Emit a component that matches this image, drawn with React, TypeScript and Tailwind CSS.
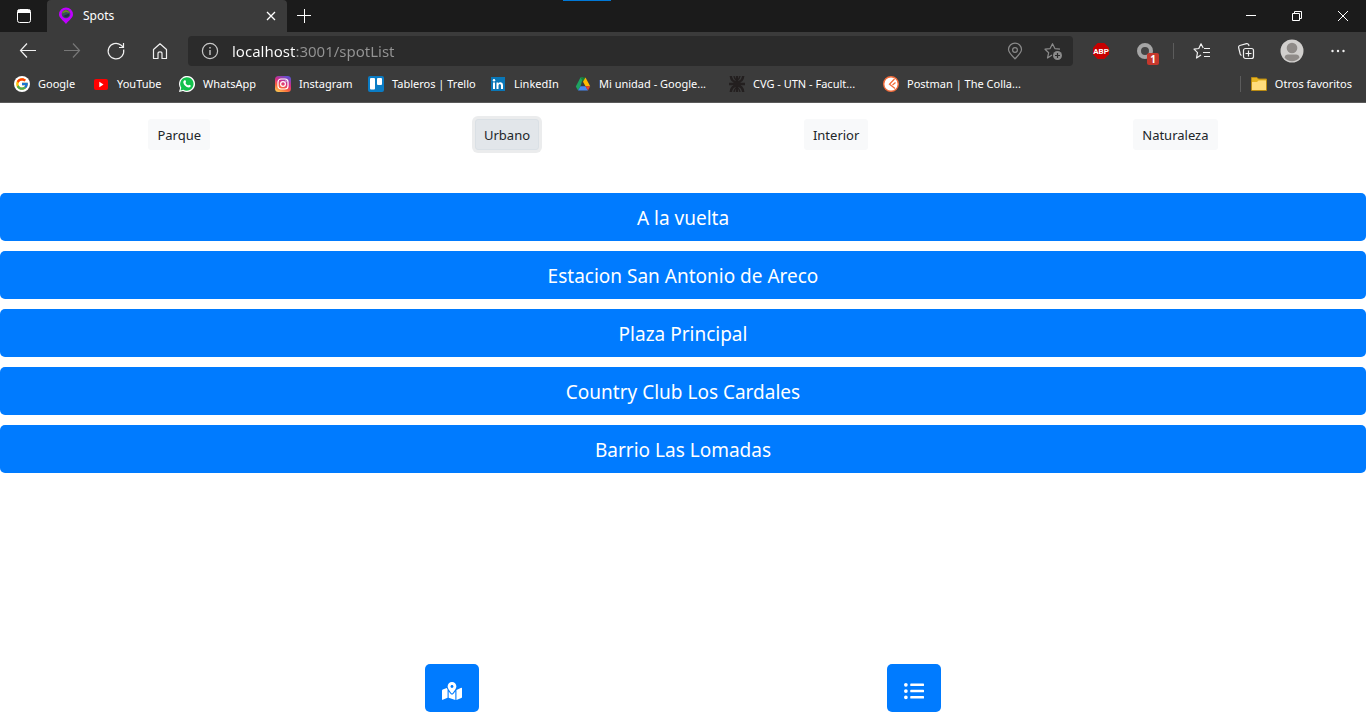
import type { ReactNode } from "react";
import { FaListUl, FaMapMarkedAlt } from "react-icons/fa";
import { FcGoogle } from "react-icons/fc";

const line = {
  width: 20,
  height: 20,
  viewBox: "0 0 20 20",
  fill: "none",
  stroke: "currentColor",
  strokeWidth: 1.2,
  "aria-hidden": true,
} as const;

const BackIcon = () => (
  <svg {...line}>
    <path d="M18 9.500H2.500M9 2.500L2.500 9.500L9 16.500" />
  </svg>
);

const ForwardIcon = () => (
  <svg {...line}>
    <path d="M2 9.500H17.500M11 2.500L17.500 9.500L11 16.500" />
  </svg>
);

const ReloadIcon = () => (
  <svg {...line}>
    <path d="M17.600 8.500A7.800 7.800 0 1 1 14.800 4L17.200 6M17.500 2V6.500H13" />
  </svg>
);

const HomeIcon = () => (
  <svg {...line} strokeLinejoin="round">
    <path d="M3.500 8.500L10 2.800L16.500 8.500V17.500H12V12.500Q12 10.800 10 10.800Q8 10.800 8 12.500V17.500H3.500Z" />
  </svg>
);

const InfoIcon = () => (
  <svg {...line} className="shrink-0 text-[#c8c8c8]">
    <circle cx="10" cy="10" r="7.600" />
    <path d="M10 9V14M10 6V7.500" strokeWidth="1.400" />
  </svg>
);

const PinIcon = () => (
  <svg {...line}>
    <path d="M10 17.800C6 14 3.500 11.700 3.500 8.600A6.500 6.500 0 0 1 16.500 8.600C16.500 11.700 14 14 10 17.800Z" />
    <circle cx="10" cy="9" r="2.400" />
  </svg>
);

const StarAddIcon = () => (
  <svg {...line} strokeLinejoin="round">
    <path d="M9 14L4.500 17L5.700 11.700L2 8.200L7.100 7.600L9.500 2.700L11.900 7.600L17 8.200" />
    <circle cx="14.500" cy="14.500" r="4.500" fill="currentColor" stroke="none" />
    <path d="M14.500 12V17M12 14.500H17" stroke="#2b2b2b" />
  </svg>
);

const FavoritesIcon = () => (
  <svg {...line} strokeLinejoin="round">
    <path d="M9 14L4.500 17L5.500 11.700L2 8.200L6.800 7.500L9 2.800L11.200 7M12 7.500H18M11 11.500H18M12 15.500H18" />
  </svg>
);

const CollectionsIcon = () => (
  <svg {...line}>
    <rect x="7.500" y="7.500" width="10" height="10" rx="2" />
    <path d="M12.500 9.500V15.500M9.500 12.500H15.500M5.500 14.500Q4.500 14 4.200 13L2.600 6.500Q2.300 5 3.800 4.500L10.500 2.600Q12 2.300 12.700 3.800L13 5" />
  </svg>
);

const CloseIcon = () => (
  <svg {...line} width="10" height="10" viewBox="0 0 10 10">
    <path d="M1 1L9 9M9 1L1 9" strokeWidth="1.300" />
  </svg>
);

const SpotsLogo = () => (
  <svg width="16" height="18" viewBox="0 0 16 18" aria-hidden="true">
    <path d="M8 17C5.500 13.500 1 11 1 7.500A7 7 0 0 1 15 7.500C15 11 10.500 13.500 8 17Z" fill="#bf00ff" />
    <circle cx="8" cy="7" r="4.300" fill="#35505a" />
    <path d="M4 6.500A4.200 4.200 0 0 1 12 6L8 5Z" fill="#6d8b25" />
    <path d="M5 9L11 6.500V9L8 10.500Z" fill="#262c46" />
  </svg>
);

const AdBlockLogo = () => (
  <svg width="18" height="18" viewBox="0 0 18 18" aria-hidden="true">
    <path d="M5.700 1H12.300L17 5.700V12.300L12.300 17H5.700L1 12.300V5.700Z" fill="#c70000" />
    <text x="9" y="11.800" textAnchor="middle" fill="#fff" fontFamily="Roboto, sans-serif" fontSize="8" fontWeight="700">
      ABP
    </text>
  </svg>
);

const GoogleLogo = () => (
  <span className="flex size-4 items-center justify-center rounded-full bg-white">
    <FcGoogle size={14} />
  </span>
);

const YouTubeLogo = () => (
  <svg width="16" height="16" viewBox="0 0 16 16" aria-hidden="true">
    <rect x="1" y="3" width="14" height="11" rx="2" fill="#f00" />
    <path d="M6.300 5.800V11.200L10.500 8.500Z" fill="#fff" />
  </svg>
);

const WhatsAppLogo = () => (
  <svg width="16" height="16" viewBox="0 0 16 16" aria-hidden="true">
    <path d="M0 16L1.100 12A8 8 0 1 1 4 14.900Z" fill="#fff" />
    <path d="M1.500 14.500L2.300 11.700A6.700 6.700 0 1 1 4.400 13.700Z" fill="#12c04b" />
    <path d="M5.300 4.200L6.500 4.300L7.100 6L6.400 7Q7.300 8.700 9.200 9.500L10 8.700L11.800 9.500Q11.800 11.600 9.800 11.600Q5.300 10.700 4.300 6.500Q4.200 4.900 5.300 4.200Z" fill="#fff" />
  </svg>
);

const InstagramLogo = () => (
  <svg width="16" height="16" viewBox="0 0 16 16" fill="none" aria-hidden="true">
    <defs>
      <linearGradient id="insta" x1="0.200" y1="1" x2="0.700" y2="0">
        <stop offset="0" stopColor="#ffc850" />
        <stop offset="0.300" stopColor="#f9653c" />
        <stop offset="0.600" stopColor="#d82d83" />
        <stop offset="1" stopColor="#6250d2" />
      </linearGradient>
    </defs>
    <rect width="16" height="16" rx="3.500" fill="url(#insta)" />
    <rect x="3" y="3" width="10" height="10" rx="3" stroke="#fff" strokeWidth="1.200" />
    <circle cx="8" cy="8" r="2.400" stroke="#fff" strokeWidth="1.200" />
    <circle cx="11" cy="5" r="0.700" fill="#fff" />
  </svg>
);

const TrelloLogo = () => (
  <svg width="16" height="16" viewBox="0 0 16 16" aria-hidden="true">
    <rect width="16" height="16" rx="2" fill="#0a7cc5" />
    <rect x="2" y="2" width="5" height="11.500" rx="1" fill="#fff" />
    <rect x="9" y="2" width="5" height="7" rx="1" fill="#fff" />
  </svg>
);

const LinkedInLogo = () => (
  <svg width="16" height="16" viewBox="0 0 16 16" aria-hidden="true">
    <rect x="1" y="1" width="14" height="14" fill="#0a77b7" />
    <path d="M3 6.500H5V13H3ZM6.500 6.500H8.400V7.500Q9 6.300 10.600 6.300Q13 6.400 13 9V13H11V9.500Q11 8 9.800 8Q8.500 8 8.500 9.500V13H6.500Z" fill="#fff" />
    <circle cx="4" cy="4.200" r="1.200" fill="#fff" />
  </svg>
);

const DriveLogo = () => (
  <svg width="16" height="16" viewBox="0 0 16 16" aria-hidden="true">
    <path d="M5.500 1.500H8L5.600 10L3 14.500L0.800 10.500Z" fill="#1ea362" />
    <path d="M5.500 1.500H10.500L8 5.800Z" fill="#188038" />
    <path d="M10.500 1.500L15.200 10.200H10.500L8 5.800Z" fill="#ffba00" />
    <path d="M3 14.500L5.500 10.200H10.500L13 14.500Z" fill="#4688f4" />
    <path d="M10.500 10.200H15.200L13 14.500Z" fill="#ea4335" />
  </svg>
);

const UtnLogo = () => (
  <svg width="16" height="16" viewBox="0 0 16 16" fill="none" stroke="#231f1f" strokeWidth="2.400" aria-hidden="true">
    <path d="M8 0V16M0 8H16M1.800 0Q2.300 5.800 8 6.500Q13.700 5.800 14.200 0M1.800 16Q2.300 10.200 8 9.500Q13.700 10.200 14.200 16" />
    <path d="M5 0Q5.300 3.200 8 4.500Q10.700 3.200 11 0M5 16Q5.300 12.800 8 11.500Q10.700 12.800 11 16" strokeWidth="1.300" />
  </svg>
);

const PostmanLogo = () => (
  <svg width="16" height="16" viewBox="0 0 16 16" fill="none" aria-hidden="true">
    <circle cx="8" cy="8" r="7.300" fill="#fff" stroke="#f26b3a" strokeWidth="1.400" />
    <path d="M11.500 3L6.500 8.200L12 12.500M12.500 6.500L9.500 9" stroke="#f26b3a" strokeWidth="1.300" />
  </svg>
);

const FolderIcon = () => (
  <svg width="16" height="16" viewBox="0 0 16 16" aria-hidden="true">
    <path d="M0.500 1.500H6L7.500 3H15.500V14.500H0.500Z" fill="#e6b422" stroke="#b98a12" />
    <path d="M1 6H6L7.500 4.500H15V14H1Z" fill="#ffdc7c" />
  </svg>
);

type Bookmark = { label: string; logo: ReactNode; width: string };

const bookmarks: Bookmark[] = [
  { label: "Google", logo: <GoogleLogo />, width: "w-[79px]" },
  { label: "YouTube", logo: <YouTubeLogo />, width: "w-[86px]" },
  { label: "WhatsApp", logo: <WhatsAppLogo />, width: "w-[96px]" },
  { label: "Instagram", logo: <InstagramLogo />, width: "w-[93px]" },
  { label: "Tableros | Trello", logo: <TrelloLogo />, width: "w-[122px]" },
  { label: "LinkedIn", logo: <LinkedInLogo />, width: "w-[85px]" },
  { label: "Mi unidad - Google...", logo: <DriveLogo />, width: "w-[154px]" },
  { label: "CVG - UTN - Facult...", logo: <UtnLogo />, width: "w-[154px]" },
  { label: "Postman | The Colla...", logo: <PostmanLogo />, width: "w-[154px]" },
];

const categories = ["Parque", "Urbano", "Interior", "Naturaleza"];

const spots = [
  "A la vuelta",
  "Estacion San Antonio de Areco",
  "Plaza Principal",
  "Country Club Los Cardales",
  "Barrio Las Lomadas",
];

function ToolButton({ label, className = "w-11", children }: { label: string; className?: string; children: ReactNode }) {
  return (
    <button type="button" aria-label={label} className={`flex h-8 shrink-0 items-center justify-center ${className}`}>
      {children}
    </button>
  );
}

function TabStrip() {
  return (
    <div className="relative flex h-8 bg-[#1b1b1b] text-white">
      <div className="absolute top-0 left-[563px] h-px w-12 bg-[#0078d7]" />
      <ToolButton label="Tabs" className="w-[47px]">
        <svg width="16" height="16" viewBox="0 0 16 16" fill="none" stroke="currentColor" aria-hidden="true">
          <rect x="1.500" y="1.500" width="13" height="13" rx="2" />
          <path d="M2 3.500H14" strokeWidth="3" />
        </svg>
      </ToolButton>
      <div className="flex w-60 items-center rounded-t bg-[#3b3b3b] pl-[11px]">
        <SpotsLogo />
        <span className="ml-[9px] flex-1 text-xs">Spots</span>
        <ToolButton label="Close tab" className="w-8">
          <CloseIcon />
        </ToolButton>
      </div>
      <ToolButton label="New tab" className="w-[34px]">
        <svg width="16" height="16" viewBox="0 0 16 16" fill="none" stroke="currentColor" aria-hidden="true">
          <path d="M8.500 1V15M1 7.500H15" />
        </svg>
      </ToolButton>
      <div className="ml-auto flex h-7">
        <ToolButton label="Minimize" className="w-[46px]">
          <svg width="10" height="10" viewBox="0 0 10 10" stroke="currentColor" aria-hidden="true">
            <path d="M0 4.500H10" />
          </svg>
        </ToolButton>
        <ToolButton label="Restore" className="w-[46px]">
          <svg width="10" height="10" viewBox="0 0 10 10" fill="none" stroke="currentColor" aria-hidden="true">
            <path d="M0.500 2.500H7.500V9.500H0.500ZM2.500 2.500V0.500H9.500V7.500H7.500" />
          </svg>
        </ToolButton>
        <ToolButton label="Close" className="w-[46px]">
          <svg width="10" height="10" viewBox="0 0 10 10" fill="none" stroke="currentColor" aria-hidden="true">
            <path d="M0 0L10 10M10 0L0 10" />
          </svg>
        </ToolButton>
      </div>
    </div>
  );
}

function Toolbar() {
  return (
    <div className="flex h-[38px] items-center px-1.5 text-[#f0f0f0]">
      <ToolButton label="Back"><BackIcon /></ToolButton>
      <ToolButton label="Forward" className="w-11 text-[#777]"><ForwardIcon /></ToolButton>
      <ToolButton label="Reload"><ReloadIcon /></ToolButton>
      <ToolButton label="Home"><HomeIcon /></ToolButton>
      <div className="ml-1.5 flex h-[30px] min-w-0 flex-1 items-center rounded bg-[#2b2b2b] pl-3 text-[#8a8a8a]">
        <InfoIcon />
        <input
          type="text"
          aria-label="Address"
          defaultValue="localhost:3001/spotList"
          className="ml-3 min-w-0 flex-1 bg-[linear-gradient(90deg,#fff_63px,#949494_63px)] bg-clip-text font-['Noto_Sans','Open_Sans',sans-serif] text-[15px] text-transparent outline-none"
        />
        <ToolButton label="Location" className="w-9"><PinIcon /></ToolButton>
        <ToolButton label="Add to favorites" className="w-10"><StarAddIcon /></ToolButton>
      </div>
      <ToolButton label="AdBlock Plus" className="ml-[5px] w-[46px]">
        <AdBlockLogo />
      </ToolButton>
      <ToolButton label="Extension" className="w-[46px]">
        <span className="relative flex size-5 items-center">
          <span className="size-4 rounded-full border-4 border-[#a5a5a5] bg-[#444]" />
          <span className="absolute top-3 left-2.5 flex size-3 items-center justify-center rounded-xs bg-[#c5372c] text-[10px] font-bold text-white">1</span>
        </span>
      </ToolButton>
      <div className="mr-1.5 ml-[3px] h-4 w-px bg-[#5c5c5c]" />
      <ToolButton label="Favorites"><FavoritesIcon /></ToolButton>
      <ToolButton label="Collections"><CollectionsIcon /></ToolButton>
      <ToolButton label="Profile" className="w-12">
        <svg width="24" height="24" viewBox="0 0 24 24" aria-hidden="true">
          <circle cx="12" cy="12" r="11.500" fill="#d1cfcd" />
          <circle cx="12" cy="9" r="5.300" fill="#8f8b88" />
          <path d="M4.500 18.500Q5 15.500 8 15.500H16Q19 15.500 19.500 18.500Q16.500 22.300 12 22.300Q7.500 22.300 4.500 18.500Z" fill="#8f8b88" />
        </svg>
      </ToolButton>
      <ToolButton label="Settings">
        <svg width="14" height="4" viewBox="0 0 14 4" fill="currentColor" aria-hidden="true">
          <circle cx="1.500" cy="2" r="1.200" />
          <circle cx="7" cy="2" r="1.200" />
          <circle cx="12.500" cy="2" r="1.200" />
        </svg>
      </ToolButton>
    </div>
  );
}

function BookmarksBar() {
  return (
    <nav aria-label="Bookmarks" className="flex h-[33px] items-center border-b border-[#5a5a5a] px-3.5 pb-1 text-[11px] text-white">
      {bookmarks.map(({ label, logo, width }) => (
        <a key={label} href="#" className={`flex shrink-0 items-center gap-2 whitespace-nowrap ${width}`}>
          {logo}
          {label}
        </a>
      ))}
      <a href="#" className="ml-auto flex items-center gap-2 border-l border-[#5c5c5c] pl-2.5 whitespace-nowrap">
        <FolderIcon />
        Otros favoritos
      </a>
    </nav>
  );
}

export default function App() {
  return (
    <div className="flex min-h-screen flex-col bg-white font-['Noto_Sans','Open_Sans',sans-serif]">
      <header className="bg-[#3b3b3b]">
        <TabStrip />
        <Toolbar />
        <BookmarksBar />
      </header>
      <main className="flex flex-1 flex-col">
        <div className="flex justify-around px-4 pt-4">
          {categories.map((name) => (
            <button
              key={name}
              type="button"
              aria-pressed={name === "Urbano"}
              className="rounded-[3px] border border-[#f8f9fa] bg-[#f8f9fa] px-2 pt-[5px] pb-[3px] text-[13px] leading-[21px] text-[#212529] aria-pressed:border-[#dae0e5] aria-pressed:bg-[#e2e6ea] aria-pressed:ring-3 aria-pressed:ring-[#ebeced]"
            >
              {name}
            </button>
          ))}
        </div>
        <div className="mt-[43px] flex flex-col gap-2.5">
          {spots.map((name) => (
            <button key={name} type="button" className="h-12 w-full rounded-[5px] bg-[#007bff] pt-0.5 text-[19px] text-white">
              {name}
            </button>
          ))}
        </div>
        <div className="mt-auto flex justify-evenly px-4 pt-4 pb-4">
          <button type="button" aria-label="Map" className="flex h-12 w-[54px] items-center justify-center rounded-[5px] bg-[#007bff] pt-1.5 text-white">
            <FaMapMarkedAlt size={20} />
          </button>
          <button type="button" aria-label="List" className="flex h-12 w-[54px] items-center justify-center rounded-[5px] bg-[#007bff] pt-1.5 text-white">
            <FaListUl size={20} />
          </button>
        </div>
      </main>
    </div>
  );
}
